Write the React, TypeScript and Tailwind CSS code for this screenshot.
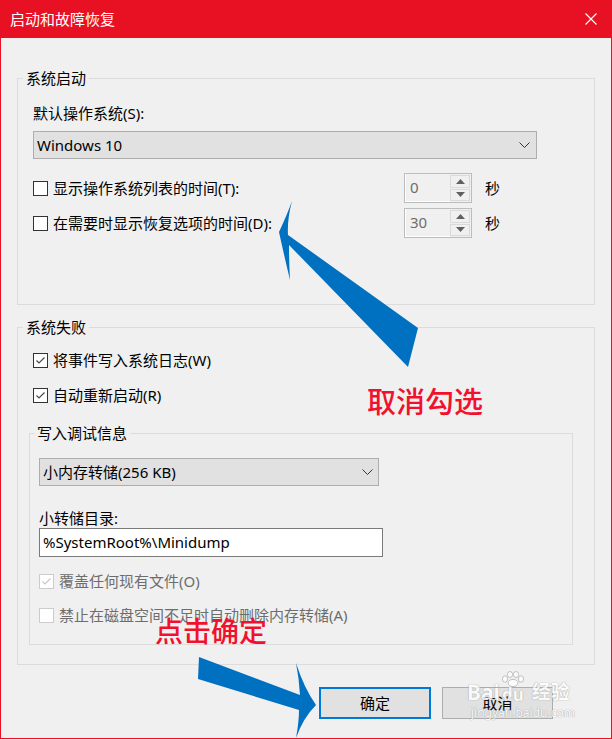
import { ReactNode } from 'react';

const font = "font-[family-name:'Noto_Sans','Noto_Sans_CJK_SC',sans-serif]";

function Box({ checked = false, disabled = false }: { checked?: boolean; disabled?: boolean }) {
    return (
        <span
            className={`flex h-[15px] w-[15px] shrink-0 items-center justify-center border bg-white ${
                disabled ? 'border-[#cccccc]' : 'border-[#333333]'
            }`}
        >
            {checked && (
                <svg width="13" height="13" viewBox="0 0 13 13">
                    <polyline
                        points="2.5,6.5 5,9 10.5,3.5"
                        fill="none"
                        stroke={disabled ? '#c8c8c8' : '#4a4a4a'}
                        strokeWidth="1.2"
                    />
                </svg>
            )}
        </span>
    );
}

function Check({ checked, disabled, children }: { checked?: boolean; disabled?: boolean; children: ReactNode }) {
    return (
        <div className={`flex h-[20px] items-center gap-[5px] ${disabled ? 'text-[#6d6d6d]' : 'text-black'}`}>
            <Box checked={checked} disabled={disabled} />
            <span className="leading-[20px]">{children}</span>
        </div>
    );
}

function Chevron() {
    return (
        <svg width="11" height="6" viewBox="0 0 11 6">
            <polyline points="0.5,0.5 5.5,5.5 10.5,0.5" fill="none" stroke="#333" strokeWidth="1" />
        </svg>
    );
}

function Spinner({ value }: { value: string }) {
    return (
        <div className="flex h-[30px] w-[68px] border border-[#bcbcbc] bg-[#f0f0f0]">
            <div className="flex flex-1 items-center border-b border-l border-white pl-[4px] text-[#6d6d6d]">
                {value}
            </div>
            <div className="flex w-[21px] flex-col gap-[1px] py-[1px] pr-[1px]">
                <div className="flex flex-1 items-center justify-center border border-[#dadada] bg-[#f0f0f0]">
                    <svg width="9" height="5" viewBox="0 0 9 5">
                        <polygon points="0,5 4.5,0 9,5" fill="#606060" />
                    </svg>
                </div>
                <div className="flex flex-1 items-center justify-center border border-[#dadada] bg-[#f0f0f0]">
                    <svg width="9" height="5" viewBox="0 0 9 5">
                        <polygon points="0,0 9,0 4.5,5" fill="#606060" />
                    </svg>
                </div>
            </div>
        </div>
    );
}

export default function App() {
    return (
        <div
            className={`relative h-[739px] w-[612px] overflow-hidden border-x border-b border-[#e81123] bg-[#f0f0f0] text-[15px] text-black ${font}`}
        >
            <div className="flex h-[38px] items-center justify-between bg-[#e81123] pl-[9px] pr-[14px] text-white">
                <span className="leading-[20px]">启动和故障恢复</span>
                <svg width="12" height="12" viewBox="0 0 12 12">
                    <path d="M0.5,0.5 L11.5,11.5 M11.5,0.5 L0.5,11.5" stroke="#fff" strokeWidth="1.1" />
                </svg>
            </div>

            <div className="px-4">
                <fieldset className="mt-[30px] h-[237px] border border-[#dcdcdc]">
                    <legend className="ml-[5px] px-[3px] leading-[20px]">系统启动</legend>
                    <div className="pl-[15px]">
                        <div className="mt-[15px] leading-[20px]">默认操作系统(S):</div>
                        <div className="mt-[8px] flex h-[28px] w-[504px] items-center justify-between border border-[#adadad] bg-[#e1e1e1] pl-[3px] pr-[6px]">
                            <span>Windows 10</span>
                            <Chevron />
                        </div>
                        <div className="mt-[14px] flex h-[30px] items-center">
                            <div className="w-[371px]">
                                <Check>显示操作系统列表的时间(T):</Check>
                            </div>
                            <Spinner value="0" />
                            <span className="ml-[13px]">秒</span>
                        </div>
                        <div className="mt-[5px] flex h-[30px] items-center">
                            <div className="w-[371px]">
                                <Check>在需要时显示恢复选项的时间(D):</Check>
                            </div>
                            <Spinner value="30" />
                            <span className="ml-[13px]">秒</span>
                        </div>
                    </div>
                </fieldset>

                <fieldset className="mt-[12px] h-[348px] border border-[#dcdcdc]">
                    <legend className="ml-[5px] px-[3px] leading-[20px]">系统失败</legend>
                    <div className="pl-[11px]">
                        <div className="ml-[4px] mt-[13px]">
                            <Check checked>将事件写入系统日志(W)</Check>
                        </div>
                        <div className="ml-[4px] mt-[15px]">
                            <Check checked>自动重新启动(R)</Check>
                        </div>

                        <fieldset className="mt-[18px] h-[222px] w-[544px] border border-[#dcdcdc]">
                            <legend className="ml-[4px] px-[3px] leading-[20px]">写入调试信息</legend>
                            <div className="pl-[9px]">
                                <div className="mt-[15px] flex h-[28px] w-[340px] items-center justify-between border border-[#adadad] bg-[#e1e1e1] pl-[3px] pr-[5px]">
                                    <span>小内存转储(256 KB)</span>
                                    <Chevron />
                                </div>
                                <div className="mt-[22px] leading-[20px]">小转储目录:</div>
                                <div className="flex h-[29px] w-[344px] items-center border border-[#7a7a7a] bg-white pl-[3px]">
                                    %SystemRoot%\Minidump
                                </div>
                                <div className="mt-[14px]">
                                    <Check checked disabled>
                                        覆盖任何现有文件(O)
                                    </Check>
                                </div>
                                <div className="mt-[14px]">
                                    <Check disabled>禁止在磁盘空间不足时自动删除内存转储(A)</Check>
                                </div>
                            </div>
                        </fieldset>
                    </div>
                </fieldset>

                <div className="mt-[22px] flex justify-end gap-[11px] pr-[42px]">
                    <button className="flex h-[32px] w-[112px] items-center justify-center border-2 border-[#0078d7] bg-[#e1e1e1]">
                        确定
                    </button>
                    <button className="flex h-[32px] w-[111px] items-center justify-center border border-[#adadad] bg-[#e1e1e1]">
                        取消
                    </button>
                </div>
            </div>

            {/* 水印 */}
            <div className="pointer-events-none absolute left-[466px] top-[671px] flex flex-col items-start text-white opacity-80 [text-shadow:0_0_1px_#9a9a9a,0_0_1px_#9a9a9a]">
                <div className="flex items-end">
                    <span className="text-[21px] font-bold leading-[22px]">Bai</span>
                    <div className="flex flex-col items-center">
                        <svg width="26" height="16" viewBox="0 0 26 16">
                            <g fill="#fff" stroke="#a5a5a5" strokeWidth="0.8">
                                <ellipse cx="5" cy="8" rx="2.6" ry="3.2" />
                                <ellipse cx="10" cy="3.5" rx="2.6" ry="3" />
                                <ellipse cx="16" cy="3.5" rx="2.6" ry="3" />
                                <ellipse cx="21" cy="8" rx="2.6" ry="3.2" />
                                <ellipse cx="13" cy="12" rx="5" ry="3.6" />
                            </g>
                        </svg>
                        <span className="text-[17px] font-bold leading-[16px]">du</span>
                    </div>
                    <span className="ml-[6px] text-[19px] font-bold leading-[22px]">经验</span>
                </div>
                <span className="ml-[4px] mt-[4px] text-[12px] leading-[12px]">jingyan.baidu.com</span>
            </div>

            {/* 标注 */}
            <svg className="pointer-events-none absolute left-0 top-0" width="612" height="739" viewBox="0 0 612 739">
                <path
                    d="M278,232 Q286,215 291,201 Q286,220 287,235 L417,328 L407,367 L288,245 Q288,263 289,280 Q283,255 278,232 Z"
                    fill="#0070c0"
                />
                <path
                    d="M198,657 L299,695 Q298,678 295,663 Q303,688 315,705 Q302,718 295,738 Q298,722 298,710 L197,679 Z"
                    fill="#0070c0"
                />
            </svg>
            <div className="pointer-events-none absolute left-[366px] top-[387px] text-[29px] font-medium leading-[30px] text-[#f2112d]">
                取消勾选
            </div>
            <div className="pointer-events-none absolute left-[154px] top-[616px] text-[28px] font-medium leading-[30px] text-[#f2112d]">
                点击确定
            </div>
        </div>
    );
}
